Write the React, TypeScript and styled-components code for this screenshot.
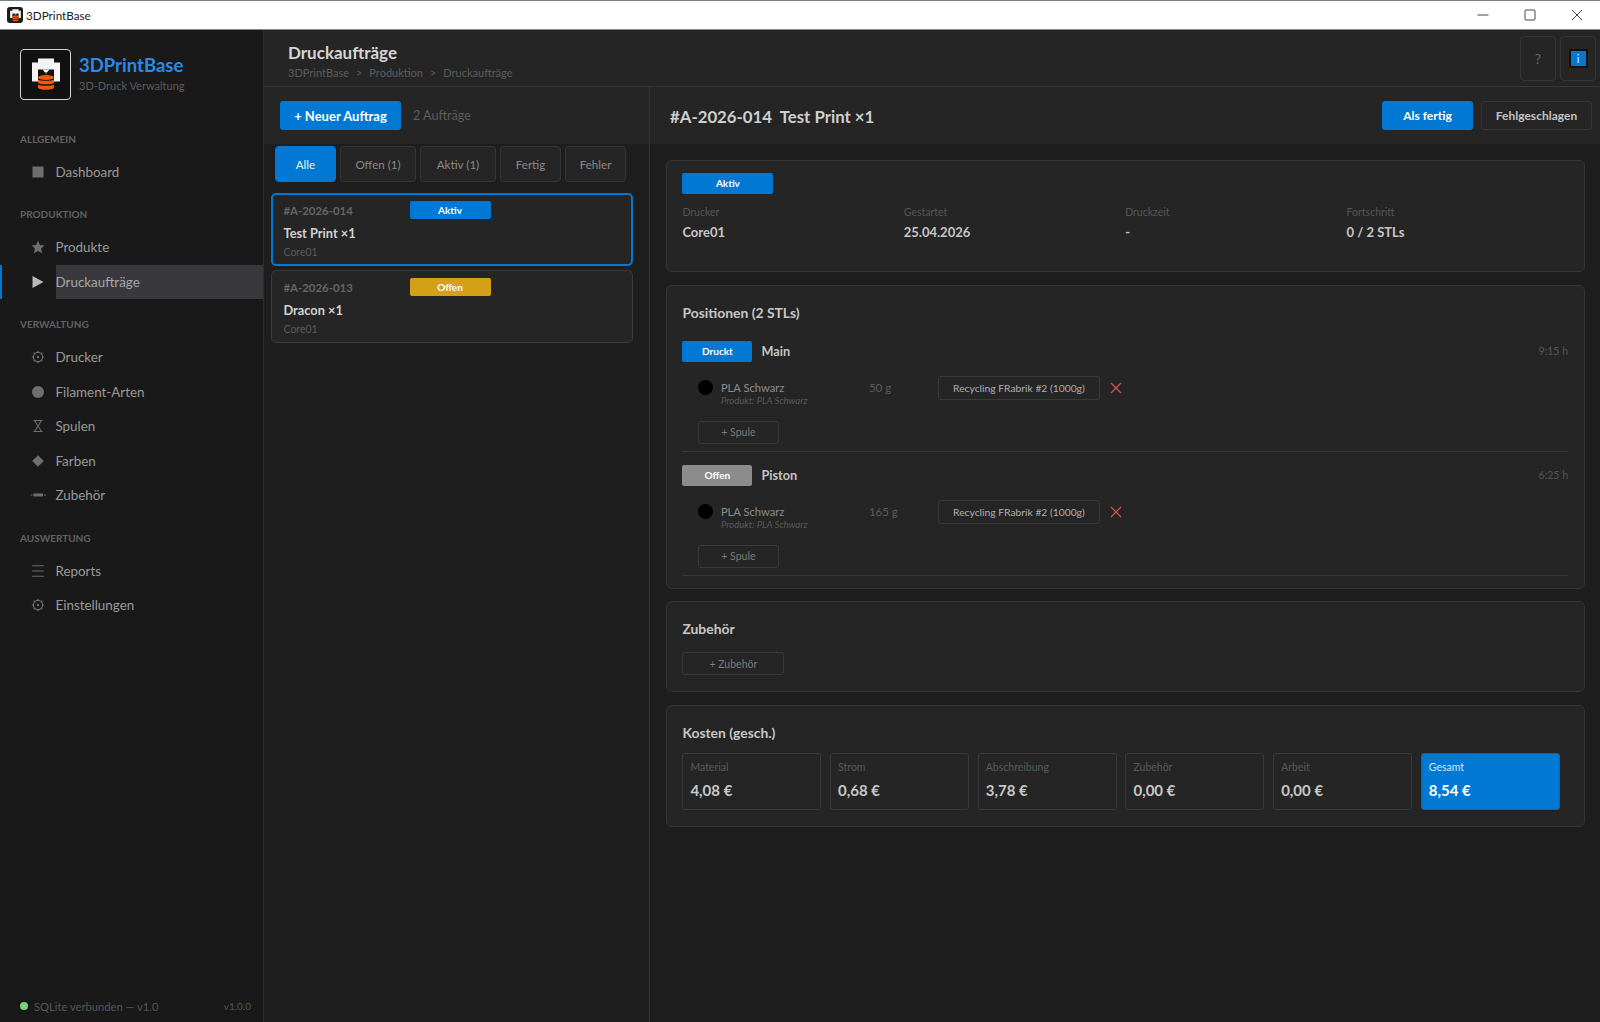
import React from "react";
import styled, { createGlobalStyle } from "styled-components";

const Global = createGlobalStyle`
  html, body { margin: 0; padding: 0; background: #1e1e1e; }
  * { box-sizing: border-box; }
  body { font-family: "Lato", "Noto Sans", sans-serif; }
`;

const Window = styled.div`
  width: 1600px; height: 1022px; display: flex; flex-direction: column; overflow: hidden; background: #1e1e1e;
`;
const TitleBar = styled.div`
  height: 30px; flex: none; background: #fff; border-top: 1px solid #76828e; border-bottom: 1px solid #8a8a8a;
  display: flex; align-items: center; padding-left: 7px;
`;
const AppName = styled.span`
  font-size: 11.7px; color: #222; margin-left: 3px;
`;
const WinControls = styled.div`
  margin-left: auto; display: flex; height: 100%;
`;
const WinButton = styled.div`
  width: 47px; display: flex; align-items: center; justify-content: center; color: #444;
`;
const Body = styled.div`
  flex: 1; display: flex; min-height: 0;
`;
const Sidebar = styled.aside`
  width: 263px; flex: none; background: #191919; display: flex; flex-direction: column;
`;
const Brand = styled.div`
  height: 75px; display: flex; align-items: flex-start; padding: 19px 0 0 20px; gap: 8px; margin-bottom: 26.5px;
`;
const LogoBox = styled.div`
  width: 51px; height: 51px; background: #111; border: 1.5px solid #d4d4d4; border-radius: 4px; flex: none;
  display: flex; align-items: center; justify-content: center;
`;
const TitleIcon = styled.div`
  width: 16px; height: 16px; background: #1c1c1c; border-radius: 3px; display: flex; align-items: center; justify-content: center;
`;
const BrandText = styled.div`
  display: flex; flex-direction: column; padding-top: 4px;
`;
const BrandName = styled.div`
  font-size: 18.5px; line-height: 24px; font-weight: 700; color: #2b8ae6;
`;
const BrandSub = styled.div`
  font-size: 11px; line-height: 17px; color: #5c5c5c;
`;
const SectionLabel = styled.div`
  font-size: 10px; line-height: 14px; font-weight: 700; color: #626262; padding-left: 20px; margin: 0 0 9px;
`;
const Section = styled.div`
  margin-bottom: 18px;
`;
const NavItem = styled.div<{ $active?: boolean }>`
  height: 34.5px; display: flex; align-items: stretch; position: relative;
  border-left: 2.5px solid ${(p) => (p.$active ? "#0078d4" : "transparent")};
`;
const NavIcon = styled.div`
  width: 53.5px; flex: none; display: flex; align-items: center; justify-content: center; padding-left: 19px; padding-right: 1px;
  color: #6e6e6e;
`;
const NavLabel = styled.div<{ $active?: boolean }>`
  flex: 1; display: flex; align-items: center; font-size: 13.4px; color: ${(p) => (p.$active ? "#a8a8a8" : "#9a9a9a")};
  background: ${(p) => (p.$active ? "#38383d" : "transparent")};
`;
const StatusBar = styled.div`
  margin-top: auto; height: 32px; display: flex; align-items: center; padding: 0 12px 0 20px; font-size: 11.2px; color: #565656;
`;
const Dot = styled.span`
  width: 8px; height: 8px; border-radius: 50%; background: #7ed07e; margin-right: 6px;
`;
const Version = styled.span`
  margin-left: auto; font-size: 10px;
`;
const Main = styled.div`
  flex: 1; min-width: 0; display: flex; flex-direction: column; border-left: 1px solid #2e2e2e;
`;
const PageHeader = styled.header`
  height: 57px; flex: none; background: #252525; border-bottom: 1px solid #363636; display: flex; align-items: flex-start;
  padding: 7px 4px 0 24px;
`;
const PageTitleGroup = styled.div`
  display: flex; flex-direction: column;
`;
const PageTitle = styled.h1`
  margin: 5px 0 0; font-size: 17px; line-height: 22px; font-weight: 700; color: #d6d6d6;
`;
const Crumbs = styled.div`
  font-size: 11px; line-height: 17px; color: #5c5c5c; display: flex; gap: 7px;
`;
const HeaderActions = styled.div`
  margin-left: auto; display: flex; gap: 4px; margin-top: -1px;
`;
const HeaderButton = styled.div`
  width: 36px; height: 45px; border: 1px solid #363636; border-radius: 4px; display: flex; align-items: center; justify-content: center;
  color: #6a6a6a; font-size: 14px;
`;
const InfoIcon = styled.span`
  width: 19px; height: 19px; background: #0078d4; border: 2px solid #101010; color: #e8f2fb; font-size: 11px; line-height: 15px; text-align: center;
`;
const Split = styled.div`
  flex: 1; display: flex; min-height: 0;
`;
const ListPane = styled.section`
  width: 386px; flex: none; border-right: 1px solid #363636; display: flex; flex-direction: column;
`;
const ListToolbar = styled.div`
  height: 57px; flex: none; background: #252525; display: flex; align-items: center; padding: 0 16px; gap: 12px;
`;
const PrimaryButton = styled.div<{ $w: number }>`
  width: ${(p) => p.$w}px; height: 29px; background: #0078d4; border-radius: 3px; color: #fff; font-size: 13px; font-weight: 700;
  display: flex; align-items: center; justify-content: center;
`;
const Muted = styled.span`
  font-size: 12.6px; color: #5c5c5c;
`;
const Filters = styled.div`
  display: flex; gap: 4px; padding: 2px 0 0 11px;
`;
const FilterButton = styled.div<{ $w: number; $on?: boolean }>`
  width: ${(p) => p.$w}px; height: 36px; border-radius: 4px; font-size: 11.6px;
  display: flex; align-items: center; justify-content: center;
  background: ${(p) => (p.$on ? "#0078d4" : "#252525")};
  border: 1px solid ${(p) => (p.$on ? "#0078d4" : "#363636")};
  color: ${(p) => (p.$on ? "#f2f2f2" : "#8a8a8a")};
`;
const Orders = styled.div`
  display: flex; flex-direction: column; gap: 4.5px; padding: 11px 16.5px 0 7px;
`;
const OrderCard = styled.div<{ $on?: boolean }>`
  height: 72.5px; background: #252525; border-radius: 5px; padding: ${(p) => (p.$on ? "5px 10.5px" : "6px 11.5px")};
  border: ${(p) => (p.$on ? "2px solid #0078d4" : "1px solid #3a3a3a")};
`;
const OrderTop = styled.div`
  display: flex; align-items: center; height: 19px;
`;
const OrderId = styled.span`
  width: 126px; font-size: 11.4px; font-weight: 700; color: #666; margin-top: 2px;
`;
const Badge = styled.span<{ $w: number; $h: number; $c: string }>`
  width: ${(p) => p.$w}px; height: ${(p) => p.$h}px; background: ${(p) => p.$c}; border-radius: 2px; color: #fff; font-size: 10px; font-weight: 700;
  display: inline-flex; align-items: center; justify-content: center; flex: none;
`;
const OrderName = styled.div`
  font-size: 12.8px; line-height: 17px; font-weight: 700; color: #d2d2d2; margin-top: 6px;
`;
const OrderPrinter = styled.div`
  font-size: 10.5px; line-height: 15px; color: #5c5c5c; margin-top: 3px;
`;
const DetailPane = styled.section`
  flex: 1; min-width: 0; display: flex; flex-direction: column;
`;
const DetailHeader = styled.div`
  height: 57px; flex: none; background: #252525; display: flex; align-items: center; padding: 0 8px 0 20px;
`;
const DetailTitle = styled.h2`
  margin: 1px 0 0; font-size: 16.8px; font-weight: 700; color: #cfcfcf; white-space: pre;
`;
const DetailActions = styled.div`
  margin-left: auto; display: flex; gap: 8px;
`;
const GhostButton = styled.div`
  width: 111px; height: 29px; border: 1px solid #363636; border-radius: 3px; color: #c4c4c4; font-size: 12px; font-weight: 700;
  display: flex; align-items: center; justify-content: center;
`;
const FinishLabel = styled.span`
  font-size: 12px;
`;
const DetailBody = styled.div`
  display: flex; flex-direction: column; gap: 12.5px; padding: 16px 15px 0 16px;
`;
const Card = styled.div<{ $h: number }>`
  height: ${(p) => p.$h}px; background: #252525; border: 1px solid #363636; border-radius: 6px; padding: 10px 16px 0 15.4px;
`;
const InfoGrid = styled.div`
  display: grid; grid-template-columns: repeat(4, 221.4px); margin-top: 8px;
`;
const FieldLabel = styled.div`
  font-size: 10.5px; line-height: 20px; color: #565656;
`;
const FieldValue = styled.div`
  font-size: 13px; line-height: 21px; font-weight: 700; color: #c8c8c8;
`;
const CardTitle = styled.h3<{ $mt: number }>`
  margin: ${(p) => p.$mt}px 0 0; font-size: 13.9px; line-height: 20px; font-weight: 700; color: #c8c8c8;
`;
const Position = styled.div<{ $last?: boolean }>`
  height: ${(p) => (p.$last ? "124px" : "129px")}; border-bottom: 1px solid #363636; padding-top: ${(p) => (p.$last ? "13px" : "18px")};
`;
const PositionHead = styled.div`
  display: flex; align-items: center; height: 21px;
`;
const PositionName = styled.span`
  margin-left: 9px; font-size: 12.7px; font-weight: 700; color: #c4c4c4;
`;
const Duration = styled.span`
  margin-left: auto; font-size: 10.5px; color: #565656;
`;
const SpoolRow = styled.div`
  display: flex; align-items: center; height: 24px; margin: 14px 0 0 15.5px;
`;
const ColorDot = styled.span`
  width: 15px; height: 15px; border-radius: 50%; background: #000; flex: none; margin-bottom: 1px;
`;
const SpoolInfo = styled.div`
  width: 148px; margin-left: 8px; position: relative; height: 24px; display: flex; align-items: center;
`;
const SpoolName = styled.span`
  font-size: 11.2px; color: #8c8c8c;
`;
const SpoolHint = styled.span`
  position: absolute; left: 0; top: 19px; font-size: 9.5px; font-style: italic; color: #5a5a5a; white-space: nowrap;
`;
const SpoolGrams = styled.span`
  width: 69px; font-size: 11.5px; color: #5c5c5c;
`;
const SpoolSelect = styled.div`
  width: 162px; height: 24px; border: 1px solid #3a3a3a; border-radius: 3px; font-size: 10.3px; color: #b0b0b0;
  display: flex; align-items: center; justify-content: center;
`;
const RemoveIcon = styled.span`
  margin-left: 10px; display: flex; color: #d9534f;
`;
const AddButton = styled.div<{ $w: number; $mt: number; $ml: number }>`
  width: ${(p) => p.$w}px; height: 23px; margin: ${(p) => p.$mt}px 0 0 ${(p) => p.$ml}px; border: 1px solid #3a3a3a; border-radius: 3px;
  font-size: 10.5px; color: #7c7c7c; display: flex; align-items: center; justify-content: center;
`;
const CostGrid = styled.div`
  display: grid; grid-template-columns: repeat(6, 139px); column-gap: 8.7px; margin-top: 10px;
`;
const CostBox = styled.div<{ $total?: boolean }>`
  height: 57px; border-radius: 3px; padding: 5px 7px;
  background: ${(p) => (p.$total ? "#0078d4" : "#252525")};
  border: 1px solid ${(p) => (p.$total ? "#3a5a78" : "#3a3a3a")};
`;
const CostLabel = styled.div<{ $total?: boolean }>`
  font-size: 10.5px; line-height: 16px; color: ${(p) => (p.$total ? "#d4e8f8" : "#5a5a5a")};
`;
const CostValue = styled.div<{ $total?: boolean }>`
  font-size: 15px; line-height: 20px; margin-top: 5px; font-weight: 700; color: ${(p) => (p.$total ? "#fff" : "#c8c8c8")};
`;

function LogoMark({ size }: { size: number }) {
  return (
    <svg width={size} height={size} viewBox="0 0 34 34" aria-hidden="true">
      <path d="M9 .5h16v4h6v19h-6V11.5H9v12H3v-19h6z" fill="#f4f4f4" />
      <path d="M13.5 11.5h7l-2.5 3h-2z" fill="#f4f4f4" />
      <path d="M16 14.5h2l-1 2.5z" fill="#ea5b0c" />
      <ellipse cx="17" cy="19.5" rx="8" ry="2.5" fill="#ea5b0c" />
      <path d="M9 21.5c2 1.8 14 1.8 16 0V25c-2 1.8-14 1.8-16 0z" fill="#ea5b0c" />
      <path d="M9 26.5c2 1.8 14 1.8 16 0V30c-2 2.4-14 2.4-16 0z" fill="#ea5b0c" />
    </svg>
  );
}

const gearPath = (
  <>
    <circle cx="7" cy="7" r="4.6" fill="none" stroke="currentColor" strokeWidth="1.2" />
    <circle cx="7" cy="7" r="1.2" fill="currentColor" />
    <path d="M7 .8v1.6M7 11.6v1.6M.8 7h1.6M11.6 7h1.6M2.6 2.6l1.1 1.1M10.3 10.3l1.1 1.1M2.6 11.4l1.1-1.1M10.3 3.7l1.1-1.1" stroke="currentColor" strokeWidth="1.1" />
  </>
);

const icons: Record<string, React.ReactNode> = {
  square: <rect x="1.5" y="1.5" width="11" height="11" fill="currentColor" />,
  star: <path d="M7 .8l1.9 4.2 4.6.5-3.4 3.1.9 4.6L7 10.9l-4 2.3.9-4.6L.5 5.5l4.6-.5z" fill="currentColor" />,
  play: <path d="M1.5 1L12.5 7 1.5 13z" fill="#b8b8b8" />,
  gear: gearPath,
  circle: <circle cx="7" cy="7" r="6" fill="currentColor" />,
  hourglass: <path d="M2.5 1.5h9M2.5 12.5h9M3.5 1.5L10.5 12.5M10.5 1.5L3.5 12.5" fill="none" stroke="currentColor" strokeWidth="1.1" />,
  diamond: <path d="M7 1.2L12.8 7 7 12.8 1.2 7z" fill="currentColor" />,
  bar: <path d="M-.5 6.5h2v1h-2zM2.5 5.5h9.5v3H2.5zM13 6.5h2v1h-2z" fill="currentColor" />,
  menu: <path d="M1.2 1.8h11.6M1.2 7h11.6M1.2 12.2h11.6" stroke="currentColor" strokeWidth="1.1" fill="none" />,
};

const IconSvg = styled.svg`
  overflow: visible;
`;

function Icon({ name }: { name: string }) {
  return (
    <IconSvg width="14" height="14" viewBox="0 0 14 14" aria-hidden="true">
      {icons[name]}
    </IconSvg>
  );
}

const nav = [
  { title: "ALLGEMEIN", items: [["square", "Dashboard"]] },
  { title: "PRODUKTION", items: [["star", "Produkte"], ["play", "Druckaufträge"]] },
  { title: "VERWALTUNG", items: [["gear", "Drucker"], ["circle", "Filament-Arten"], ["hourglass", "Spulen"], ["diamond", "Farben"], ["bar", "Zubehör"]] },
  { title: "AUSWERTUNG", items: [["menu", "Reports"], ["gear", "Einstellungen"]] },
];

const costs = [
  ["Material", "4,08 €"],
  ["Strom", "0,68 €"],
  ["Abschreibung", "3,78 €"],
  ["Zubehör", "0,00 €"],
  ["Arbeit", "0,00 €"],
  ["Gesamt", "8,54 €"],
];

function PositionBlock(props: { status: string; color: string; name: string; time: string; grams: string; last?: boolean }) {
  return (
    <Position $last={props.last}>
      <PositionHead>
        <Badge $w={70} $h={21} $c={props.color}>{props.status}</Badge>
        <PositionName>{props.name}</PositionName>
        <Duration>{props.time}</Duration>
      </PositionHead>
      <SpoolRow>
        <ColorDot />
        <SpoolInfo>
          <SpoolName>PLA Schwarz</SpoolName>
          <SpoolHint>Produkt: PLA Schwarz</SpoolHint>
        </SpoolInfo>
        <SpoolGrams>{props.grams}</SpoolGrams>
        <SpoolSelect>Recycling FRabrik #2 (1000g)</SpoolSelect>
        <RemoveIcon>
          <svg width="12" height="12" viewBox="0 0 12 12" aria-hidden="true">
            <path d="M1 1l10 10M11 1L1 11" stroke="currentColor" strokeWidth="1.2" />
          </svg>
        </RemoveIcon>
      </SpoolRow>
      <AddButton $w={81} $mt={21} $ml={15.5}>+ Spule</AddButton>
    </Position>
  );
}

export default function App() {
  return (
    <Window>
      <Global />
      <TitleBar>
        <TitleIcon><LogoMark size={13} /></TitleIcon>
        <AppName>3DPrintBase</AppName>
        <WinControls>
          <WinButton>
            <svg width="12" height="12" viewBox="0 0 12 12" aria-hidden="true"><path d="M.5 6h11" stroke="currentColor" strokeWidth="1" /></svg>
          </WinButton>
          <WinButton>
            <svg width="12" height="12" viewBox="0 0 12 12" aria-hidden="true"><rect x="1" y="1" width="10" height="10" rx="1" fill="none" stroke="currentColor" strokeWidth="1" /></svg>
          </WinButton>
          <WinButton>
            <svg width="12" height="12" viewBox="0 0 12 12" aria-hidden="true"><path d="M1 1l10 10M11 1L1 11" stroke="currentColor" strokeWidth="1" /></svg>
          </WinButton>
        </WinControls>
      </TitleBar>
      <Body>
        <Sidebar>
          <Brand>
            <LogoBox><LogoMark size={34} /></LogoBox>
            <BrandText>
              <BrandName>3DPrintBase</BrandName>
              <BrandSub>3D-Druck Verwaltung</BrandSub>
            </BrandText>
          </Brand>
          {nav.map((s) => (
            <Section key={s.title}>
              <SectionLabel>{s.title}</SectionLabel>
              {s.items.map(([icon, label]) => (
                <NavItem key={label} $active={label === "Druckaufträge"}>
                  <NavIcon><Icon name={icon} /></NavIcon>
                  <NavLabel $active={label === "Druckaufträge"}>{label}</NavLabel>
                </NavItem>
              ))}
            </Section>
          ))}
          <StatusBar>
            <Dot />
            SQLite verbunden — v1.0
            <Version>v1.0.0</Version>
          </StatusBar>
        </Sidebar>
        <Main>
          <PageHeader>
            <PageTitleGroup>
              <PageTitle>Druckaufträge</PageTitle>
              <Crumbs>
                <span>3DPrintBase</span><span>&gt;</span><span>Produktion</span><span>&gt;</span><span>Druckaufträge</span>
              </Crumbs>
            </PageTitleGroup>
            <HeaderActions>
              <HeaderButton>?</HeaderButton>
              <HeaderButton><InfoIcon>i</InfoIcon></HeaderButton>
            </HeaderActions>
          </PageHeader>
          <Split>
            <ListPane>
              <ListToolbar>
                <PrimaryButton $w={121}>+ Neuer Auftrag</PrimaryButton>
                <Muted>2 Aufträge</Muted>
              </ListToolbar>
              <Filters>
                <FilterButton $w={61} $on>Alle</FilterButton>
                <FilterButton $w={76}>Offen (1)</FilterButton>
                <FilterButton $w={76}>Aktiv (1)</FilterButton>
                <FilterButton $w={61}>Fertig</FilterButton>
                <FilterButton $w={61}>Fehler</FilterButton>
              </Filters>
              <Orders>
                <OrderCard $on>
                  <OrderTop>
                    <OrderId>#A-2026-014</OrderId>
                    <Badge $w={81} $h={18} $c="#0078d4">Aktiv</Badge>
                  </OrderTop>
                  <OrderName>Test Print ×1</OrderName>
                  <OrderPrinter>Core01</OrderPrinter>
                </OrderCard>
                <OrderCard>
                  <OrderTop>
                    <OrderId>#A-2026-013</OrderId>
                    <Badge $w={81} $h={18} $c="#d4a017">Offen</Badge>
                  </OrderTop>
                  <OrderName>Dracon ×1</OrderName>
                  <OrderPrinter>Core01</OrderPrinter>
                </OrderCard>
              </Orders>
            </ListPane>
            <DetailPane>
              <DetailHeader>
                <DetailTitle>{"#A-2026-014  Test Print ×1"}</DetailTitle>
                <DetailActions>
                  <PrimaryButton $w={91}>
                    <FinishLabel>Als fertig</FinishLabel>
                  </PrimaryButton>
                  <GhostButton>Fehlgeschlagen</GhostButton>
                </DetailActions>
              </DetailHeader>
              <DetailBody>
                <Card $h={112}>
                  <Badge $w={91} $h={21} $c="#0078d4">Aktiv</Badge>
                  <InfoGrid>
                    <div><FieldLabel>Drucker</FieldLabel><FieldValue>Core01</FieldValue></div>
                    <div><FieldLabel>Gestartet</FieldLabel><FieldValue>25.04.2026</FieldValue></div>
                    <div><FieldLabel>Druckzeit</FieldLabel><FieldValue>-</FieldValue></div>
                    <div><FieldLabel>Fortschritt</FieldLabel><FieldValue>0 / 2 STLs</FieldValue></div>
                  </InfoGrid>
                </Card>
                <Card $h={304}>
                  <CardTitle $mt={7}>Positionen (2 STLs)</CardTitle>
                  <PositionBlock status="Druckt" color="#0078d4" name="Main" time="9:15 h" grams="50 g" />
                  <PositionBlock status="Offen" color="#8c8c8c" name="Piston" time="6:25 h" grams="165 g" last />
                </Card>
                <Card $h={91}>
                  <CardTitle $mt={7}>Zubehör</CardTitle>
                  <AddButton $w={102} $mt={13} $ml={0}>+ Zubehör</AddButton>
                </Card>
                <Card $h={122}>
                  <CardTitle $mt={7}>Kosten (gesch.)</CardTitle>
                  <CostGrid>
                    {costs.map(([l, v]) => (
                      <CostBox key={l} $total={l === "Gesamt"}>
                        <CostLabel $total={l === "Gesamt"}>{l}</CostLabel>
                        <CostValue $total={l === "Gesamt"}>{v}</CostValue>
                      </CostBox>
                    ))}
                  </CostGrid>
                </Card>
              </DetailBody>
            </DetailPane>
          </Split>
        </Main>
      </Body>
    </Window>
  );
}
